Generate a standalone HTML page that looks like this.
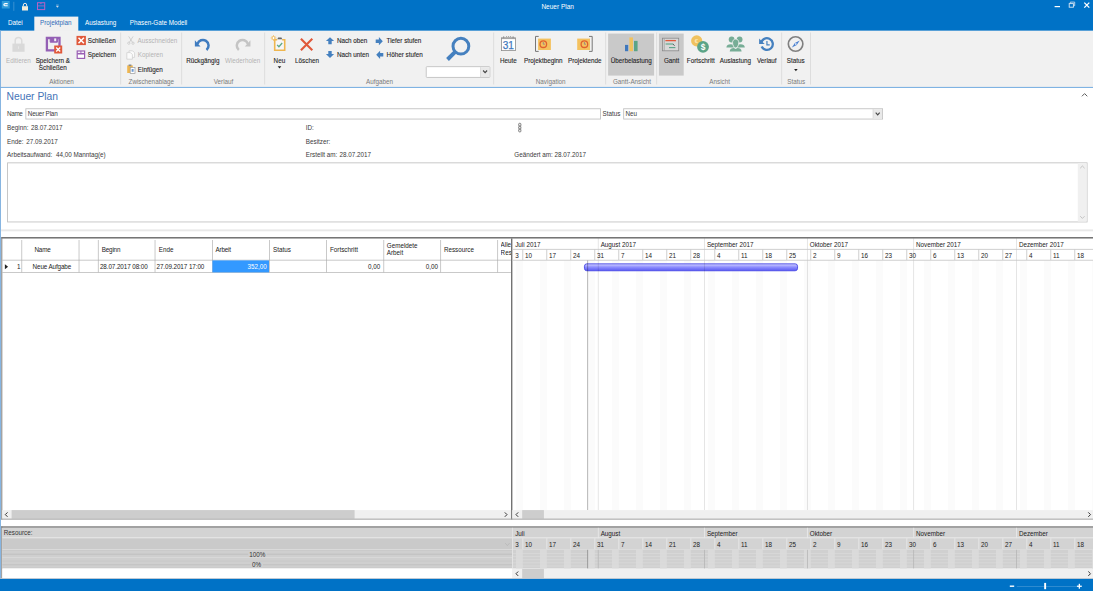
<!DOCTYPE html>
<html lang="de"><head><meta charset="utf-8"><title>Neuer Plan</title>
<style>
html,body{margin:0;padding:0;background:#fff;overflow:hidden}
body{width:1093px;height:591px;position:relative;font-family:"Liberation Sans",sans-serif;font-size:6.3px}
.r{position:absolute;display:block}
#g{position:absolute;left:0;top:0}
.t{position:absolute;display:block;white-space:nowrap;line-height:10px;height:10px}
.b{-webkit-text-stroke:.1px #262626}
</style></head><body>
<svg id="g" width="1093" height="591" viewBox="0 0 1093 591">
<rect x="0" y="0" width="1093" height="30.8" fill="#0072c6" />
<rect x="1.8" y="0.9" width="7.9" height="7.6" fill="#2f9bd9" />
<g transform="translate(1.8 0.9)"><path d="M5.9 2.7H3.3q-1.2 0-1.2 1.05T3.3 4.8H5.9" fill="none" stroke="#fff" stroke-width="1.1"/></g>
<rect x="13.3" y="1.8" width="1" height="9" fill="#fff" opacity=".22"/>
<g transform="translate(21 2)"><path d="M2.3 4.3V3a1.7 1.7 0 0 1 3.4 0v1.3" fill="none" stroke="#e8e8e8" stroke-width="1"/><rect x="1" y="4.2" width="6" height="4.3" fill="#f3ecd9"/></g>
<g transform="translate(37 2.2)"><rect x=".5" y=".5" width="7.2" height="6.9" fill="none" stroke="#b763c4" stroke-width="1"/><path d="M.5 3.7h7.2" stroke="#b763c4" stroke-width=".8"/><rect x="3.3" y=".9" width="1.2" height="1" fill="#b763c4"/></g>
<g transform="translate(55.5 4.5)"><path d="M.6 .6h2.6" stroke="#cfd8e6" stroke-width=".6"/><path d="M.5 1.6h2.8l-1.4 1.6z" fill="#cfd8e6"/></g>
<rect x="1054.6" y="6.0" width="5.4" height="1.2" fill="#fff" />
<g transform="translate(1068.5 1.3)"><path d="M1.8 2V.8h4.4v3.6H5" fill="none" stroke="#c5d9ee" stroke-width=".9"/><rect x=".7" y="2.3" width="4.2" height="3.6" fill="none" stroke="#dbe8f5" stroke-width=".9"/></g>
<g transform="translate(1083.5 2)"><path d="M.8 .6l5 5M5.8 .6l-5 5" stroke="#fff" stroke-width="1.3"/></g>
<rect x="34.3" y="16.6" width="44" height="14.5" fill="#f1f1f1" />
<rect x="0" y="30.8" width="1093" height="56.2" fill="#f1f1f1" />
<rect x="0" y="86.9" width="1093" height="1.1" fill="#7fb3e3" />
<rect x="0" y="30.5" width="0.9" height="548.5" fill="#7aadde" />
<rect x="120.3" y="32.5" width="0.8" height="52" fill="#d9d9d9" />
<rect x="181.3" y="32.5" width="0.8" height="52" fill="#d9d9d9" />
<rect x="264.3" y="32.5" width="0.8" height="52" fill="#d9d9d9" />
<rect x="493.3" y="32.5" width="0.8" height="52" fill="#d9d9d9" />
<rect x="605.3" y="32.5" width="0.8" height="52" fill="#d9d9d9" />
<rect x="656.3" y="32.5" width="0.8" height="52" fill="#d9d9d9" />
<rect x="781.3" y="32.5" width="0.8" height="52" fill="#d9d9d9" />
<rect x="810.2" y="32.5" width="0.8" height="52" fill="#d9d9d9" />
<g transform="translate(11 36)"><path d="M4.2 8V4.8a3.3 3.3 0 0 1 6.6 0V8" fill="none" stroke="#dbdbdb" stroke-width="1.5"/><rect x="1.4" y="7.6" width="12.2" height="8.2" fill="#d9d9d9"/><path d="M7.5 10.3v2.6" stroke="#e6e6e6" stroke-width="1"/></g>
<g transform="translate(45 36)"><path d="M1.9 2h12.6v12.4H1.9z" fill="none" stroke="#9460b5" stroke-width="2.3"/><path d="M5.2 1.6v4.6h7.2V1.6" fill="#9460b5" stroke="#9460b5" stroke-width="1"/><rect x="9.2" y="2.4" width="2" height="2.8" fill="#f1f1f1"/><rect x="9.2" y="9.5" width="8" height="8" fill="#e0583a"/><path d="M11.2 11.5l4 4M15.2 11.5l-4 4" stroke="#fff" stroke-width="1.3"/></g>
<g transform="translate(76.2 35.6)"><rect x=".3" y=".3" width="9.4" height="9.2" fill="#e0583a"/><path d="M2.3 2.2l5.4 5.4M7.7 2.2l-5.4 5.4" stroke="#fff" stroke-width="1.5"/></g>
<g transform="translate(76.5 50.3)"><rect x=".7" y=".7" width="7.4" height="7.4" fill="#fff" stroke="#9a5fb4" stroke-width="1.2"/><path d="M.7 3.4h7.4" stroke="#9a5fb4" stroke-width="1.6"/><path d="M4.4 .7v2.4" stroke="#9a5fb4" stroke-width=".9"/></g>
<g transform="translate(126.5 35.9)"><path d="M2.2 .5l3.8 6M6.6 .5l-3.8 6" stroke="#c6c6c6" stroke-width=".8" fill="none"/><circle cx="2.3" cy="7.3" r="1.15" fill="none" stroke="#c6c6c6" stroke-width=".7"/><circle cx="6.5" cy="7.3" r="1.15" fill="none" stroke="#c6c6c6" stroke-width=".7"/></g>
<g transform="translate(126 50)"><path d="M3 .8h3.6l2 2v4.6H3z" fill="#fbfbfb" stroke="#d0d0d0" stroke-width=".8"/><path d="M.8 2.6h3.6l2 2v4.6H.8z" fill="#fbfbfb" stroke="#d0d0d0" stroke-width=".8"/></g>
<g transform="translate(126.6 64)"><rect x=".6" y="1.4" width="5.6" height="7.6" fill="#efb64f"/><rect x="2" y=".5" width="2.8" height="1.6" fill="#8a8a8a"/><rect x="3.6" y="3.4" width="4.8" height="6" fill="#fff" stroke="#9a9a9a" stroke-width=".7"/><rect x="5" y="5" width="2" height="2.8" fill="#6d9ad3"/></g>
<g transform="translate(193 37)"><path d="M4.5 7A5.65 5.65 0 1 1 13.53 12.93" fill="none" stroke="#3f7cc0" stroke-width="2.5"/><path d="M1.9 3.2V9.4H7.5z" fill="#3f7cc0"/></g>
<g transform="translate(234.35 37)"><g transform="translate(18,0) scale(-1,1)"><path d="M4.5 7A5.65 5.65 0 1 1 13.53 12.93" fill="none" stroke="#c4c4c4" stroke-width="2.5"/><path d="M1.9 3.2V9.4H7.5z" fill="#c4c4c4"/></g></g>
<g transform="translate(270.8 35.3)"><path d="M6.4 4.4H3.9v10.6h10V4.4h-2.6" fill="#f6f6f8" stroke="#efb64f" stroke-width="1.6"/><path d="M6.6 3.9l.7-1.7h3.4l.7 1.7z" fill="#666"/><path d="M6.3 9.6l1.8 1.8 3.3-3.7" fill="none" stroke="#5fa886" stroke-width="1.3"/><circle cx="2.7" cy="2.7" r="1.5" fill="#fff" stroke="#efb64f" stroke-width=".9"/><path d="M2.7 -.2v1.1M2.7 4.5v1.1M-.2 2.7h1.1M4.5 2.7h1.1M.6 .6l.8.8M4.8 .6l-.8.8M.6 4.8l.8-.8M4.8 4.8l-.8-.8" stroke="#efb64f" stroke-width=".7"/></g>
<g transform="translate(277.7 66.1)"><path d="M0 .2h3.6l-1.8 2.2z" fill="#222"/></g>
<g transform="translate(299.9 37.8)"><path d="M1 1l11.4 11.4M12.4 1L1 12.4" stroke="#e0583a" stroke-width="2.1" stroke-linecap="butt"/></g>
<g transform="translate(326 37.2)"><path d="M4 0l4.1 3.9H5.7v3.2H2.3V3.9H-.1z" fill="#4580bf"/></g>
<g transform="translate(326 50.8)"><path d="M4 7.2l4.1-3.9H5.7V.1H2.3v3.2H-.1z" fill="#4580bf"/></g>
<g transform="translate(375.6 37.2)"><path d="M7.2 4L3.3-.1v2.4H.1v3.4h3.2v2.4z" fill="#4580bf"/></g>
<g transform="translate(376.2 50.8)"><path d="M0 4L3.9-.1v2.4h3.2v3.4H3.9v2.4z" fill="#4580bf"/></g>
<g transform="translate(445 36)"><circle cx="15.9" cy="10.2" r="7.9" fill="none" stroke="#4580bf" stroke-width="3"/><path d="M10.4 15.6L2.5 23.5" stroke="#4580bf" stroke-width="3.9"/></g>
<rect x="426.25" y="66.65" width="63.6" height="10.8" fill="#fff" stroke="#c2c2c2" stroke-width="0.9" rx="0.8" />
<rect x="480.6" y="67.1" width="8.8" height="9.9" fill="#e9e9e9" />
<rect x="480.3" y="67.1" width="0.6" height="9.9" fill="#cfcfcf" />
<g transform="translate(482.6 69.6)"><path d="M.5 .9l2 2.2 2-2.2" fill="none" stroke="#484848" stroke-width="1.15"/></g>
<g transform="translate(500.5 35.6)"><rect x=".9" y="2.2" width="14" height="12.8" fill="#fff" stroke="#8c8c8c" stroke-width=".8"/><path d="M.9 3h14" stroke="#8c8c8c" stroke-width=".8"/><path d="M3.2 .6v2M12.6 .6v2M5.6 1h1M7.6 1h1M9.6 1h1" stroke="#7a7a7a" stroke-width=".7"/><text x="7.8" y="13.3" font-family="Liberation Sans,sans-serif" font-size="10" fill="#3f78bd" stroke="#3f78bd" stroke-width=".25" text-anchor="middle">31</text></g>
<g transform="translate(534.5 35.6)"><path d="M4.2 .8H1v15h3.2" fill="none" stroke="#777" stroke-width="1"/><rect x="3.6" y="3" width="12.8" height="11.4" fill="#f4c15e"/><circle cx="8.8" cy="8.6" r="3.3" fill="none" stroke="#e0602f" stroke-width="1.3"/><path d="M8.8 6.4v2.2h1.6" fill="none" stroke="#8a7f8a" stroke-width=".8"/></g>
<g transform="translate(576 35.6)"><path d="M13 .8H16.2v15H13" fill="none" stroke="#777" stroke-width="1"/><rect x="1.2" y="3" width="12.8" height="11.4" fill="#f4c15e"/><circle cx="8.4" cy="8.6" r="3.3" fill="none" stroke="#e0602f" stroke-width="1.3"/><path d="M8.4 6.4v2.2h1.6" fill="none" stroke="#8a7f8a" stroke-width=".8"/></g>
<rect x="608.1" y="33.6" width="46" height="42" fill="#c9c9c9" />
<rect x="625" y="44.9" width="3.2" height="6.3" fill="#3f78bd" />
<rect x="629.4" y="37.4" width="3.6" height="13.8" fill="#f0c25f" />
<rect x="634" y="40.9" width="3.6" height="10.3" fill="#5ba488" />
<rect x="658.9" y="33.6" width="24.8" height="42" fill="#c9c9c9" />
<g transform="translate(662 37.6)"><rect x=".5" y=".6" width="16.2" height="12.6" fill="#d8d8d8" stroke="#8a8a8a" stroke-width=".8"/><path d="M2.2 1v12" stroke="#8a8a8a" stroke-width=".6"/><path d="M3.4 3h10" stroke="#e0583a" stroke-width="1.3"/><path d="M12.2 2.4h2l-1 1.6z" fill="#e0583a"/><path d="M3.6 6.4h7.6" stroke="#5ba488" stroke-width="1.1"/><path d="M11 6.4l1.6 1.8" stroke="#444" stroke-width=".8"/><path d="M7 10h6.4" stroke="#5ba488" stroke-width="1.1"/></g>
<g transform="translate(690.5 35)"><circle cx="6.2" cy="5.9" r="5.6" fill="#f0c25f"/><text x="6" y="8" font-family="Liberation Sans,sans-serif" font-size="6" font-weight="bold" fill="#fbe7b8" text-anchor="middle">€</text><circle cx="12.5" cy="11.8" r="5.9" fill="#5ba488"/><text x="12.5" y="14.8" font-family="Liberation Sans,sans-serif" font-size="8.4" font-weight="bold" fill="#fff" text-anchor="middle">$</text></g>
<g transform="translate(725.9 35.8)"><circle cx="5.72" cy="3.7" r="2.9" fill="#77ad96"/><circle cx="13.7" cy="3.7" r="2.9" fill="#77ad96"/><path d="M.5 11.8q.3-3.3 4.2-3.3 2.4 0 3.2 1.2v2.1z" fill="#77ad96"/><path d="M18.9 11.8q-.3-3.3-4.2-3.3-2.4 0-3.2 1.2v2.1z" fill="#77ad96"/><path d="M9.76 3.3c2.2 0 3.1 1.5 3.1 3.6 0 2.6-1.5 5.2-3.1 5.2s-3.1-2.6-3.1-5.2c0-2.1.9-3.6 3.1-3.6z" fill="#77ad96" stroke="#f1f1f1" stroke-width=".8"/><path d="M3.8 15.6q.4-3.3 4.2-3.3l1.76 1 1.76-1q3.8 0 4.2 3.3z" fill="#77ad96"/></g>
<g transform="translate(758.8 36.5)"><path d="M2.31 7.08A5.85 5.85 0 1 1 2.84 10.06" fill="none" stroke="#4580bf" stroke-width="2.3"/><path d="M.3 2.1V7.6H5.9z" fill="#4580bf"/><path d="M8.14 4.4v4h2.8" fill="none" stroke="#4580bf" stroke-width="1.2"/></g>
<g transform="translate(786.9 35.65)"><circle cx="8.69" cy="8.39" r="7.25" fill="none" stroke="#808080" stroke-width="1.65"/><path d="M12.81 4.85L9.83 9.39 4.99 11.85 7.97 7.31z" fill="#4a7fd0"/><circle cx="8.9" cy="8.35" r=".9" fill="#d5e2f5"/></g>
<g transform="translate(794.1 68.9)"><path d="M0 .2h3.6l-1.8 2.2z" fill="#222"/></g>
<g transform="translate(1081.2 92.4)"><path d="M.7 3.9l2.7-2.7 2.7 2.7" fill="none" stroke="#5e5e5e" stroke-width="1"/></g>
<rect x="25.85" y="108.75" width="574.7" height="10.3" fill="#fff" stroke="#c2c2c2" stroke-width="0.9" />
<rect x="623.65" y="108.75" width="258.9" height="10.3" fill="#fff" stroke="#c2c2c2" stroke-width="0.9" />
<rect x="873" y="109.1" width="9.1" height="9.4" fill="#e9e9e9" />
<rect x="872.7" y="109.1" width="0.6" height="9.4" fill="#cfcfcf" />
<g transform="translate(875.2 111.8)"><path d="M.5 .9l2 2.2 2-2.2" fill="none" stroke="#484848" stroke-width="1.15"/></g>
<g transform="translate(517.9 122.8)"><rect x=".8" y=".5" width="2.2" height="2.8" rx=".8" fill="none" stroke="#5a5a5a" stroke-width=".75"/><rect x=".8" y="3.4" width="2.2" height="2.8" rx=".8" fill="none" stroke="#5a5a5a" stroke-width=".75"/><rect x=".8" y="6.3" width="2.2" height="2.8" rx=".8" fill="none" stroke="#5a5a5a" stroke-width=".75"/></g>
<rect x="7.55" y="162.85" width="1079.5" height="59.1" fill="#fff" stroke="#c2c2c2" stroke-width="0.9" />
<rect x="1077.8" y="163.2" width="8.9" height="58.4" fill="#f0f0f0" />
<g transform="translate(1079.4 165.2)"><path d="M.8 3l2.2-2.2 2.2 2.2" fill="none" stroke="#b0b0b0" stroke-width=".7"/></g>
<g transform="translate(1079.4 215.2)"><path d="M.8 1l2.2 2.2 2.2-2.2" fill="none" stroke="#b0b0b0" stroke-width=".7"/></g>
<rect x="1.1" y="229.4" width="1092" height="1.9" fill="#e8e8e8" />
<rect x="1.3" y="237.1" width="1092" height="1.4" fill="#666" />
<rect x="1.3" y="237.1" width="1" height="282.6" fill="#7c7c7c" />
<rect x="21.5" y="240" width="0.65" height="32.4" fill="#acacac" />
<rect x="78.7" y="240" width="0.65" height="32.4" fill="#acacac" />
<rect x="97.9" y="240" width="0.65" height="32.4" fill="#acacac" />
<rect x="154.7" y="240" width="0.65" height="32.4" fill="#acacac" />
<rect x="212" y="240" width="0.65" height="32.4" fill="#acacac" />
<rect x="269" y="240" width="0.65" height="32.4" fill="#acacac" />
<rect x="326" y="240" width="0.65" height="32.4" fill="#acacac" />
<rect x="383.5" y="240" width="0.65" height="32.4" fill="#acacac" />
<rect x="440.4" y="240" width="0.65" height="32.4" fill="#acacac" />
<rect x="497.4" y="240" width="0.65" height="32.4" fill="#acacac" />
<rect x="2.3" y="259.8" width="508.6" height="0.65" fill="#acacac" />
<rect x="2.3" y="272.2" width="508.6" height="0.65" fill="#acacac" />
<g transform="translate(4.6 263.8)"><path d="M.3 .4v5l3.2-2.5z" fill="#222"/></g>
<rect x="212.4" y="260.4" width="56.6" height="12" fill="#3399ff" />
<rect x="511.0" y="238.4" width="1.4" height="281.2" fill="#727272" />
<rect x="515.94" y="260.5" width="6.86" height="249.5" fill="#fbfbfb" />
<rect x="539.94" y="260.5" width="6.86" height="249.5" fill="#fbfbfb" />
<rect x="563.94" y="260.5" width="6.86" height="249.5" fill="#fbfbfb" />
<rect x="587.94" y="260.5" width="6.86" height="249.5" fill="#fbfbfb" />
<rect x="611.94" y="260.5" width="6.86" height="249.5" fill="#fbfbfb" />
<rect x="635.94" y="260.5" width="6.86" height="249.5" fill="#fbfbfb" />
<rect x="659.94" y="260.5" width="6.86" height="249.5" fill="#fbfbfb" />
<rect x="683.94" y="260.5" width="6.86" height="249.5" fill="#fbfbfb" />
<rect x="707.94" y="260.5" width="6.86" height="249.5" fill="#fbfbfb" />
<rect x="731.94" y="260.5" width="6.86" height="249.5" fill="#fbfbfb" />
<rect x="755.94" y="260.5" width="6.86" height="249.5" fill="#fbfbfb" />
<rect x="779.94" y="260.5" width="6.86" height="249.5" fill="#fbfbfb" />
<rect x="803.94" y="260.5" width="6.86" height="249.5" fill="#fbfbfb" />
<rect x="827.94" y="260.5" width="6.86" height="249.5" fill="#fbfbfb" />
<rect x="851.94" y="260.5" width="6.86" height="249.5" fill="#fbfbfb" />
<rect x="875.94" y="260.5" width="6.86" height="249.5" fill="#fbfbfb" />
<rect x="899.94" y="260.5" width="6.86" height="249.5" fill="#fbfbfb" />
<rect x="923.94" y="260.5" width="6.86" height="249.5" fill="#fbfbfb" />
<rect x="947.94" y="260.5" width="6.86" height="249.5" fill="#fbfbfb" />
<rect x="971.94" y="260.5" width="6.86" height="249.5" fill="#fbfbfb" />
<rect x="995.94" y="260.5" width="6.86" height="249.5" fill="#fbfbfb" />
<rect x="1019.94" y="260.5" width="6.86" height="249.5" fill="#fbfbfb" />
<rect x="1043.94" y="260.5" width="6.86" height="249.5" fill="#fbfbfb" />
<rect x="1067.94" y="260.5" width="6.86" height="249.5" fill="#fbfbfb" />
<rect x="1091.94" y="260.5" width="6.86" height="249.5" fill="#fbfbfb" />
<defs><linearGradient id="bg1" x1="0" y1="0" x2="0" y2="1"><stop offset="0" stop-color="#d6d6ff"/><stop offset=".45" stop-color="#9090ff"/><stop offset="1" stop-color="#5c5cf2"/></linearGradient></defs>
<rect x="584.45" y="263.85" width="213.1" height="6.9" fill="url(#bg1)" stroke="#4646e6" stroke-width="0.9" rx="2.4" />
<rect x="597.83" y="238.4" width="0.8" height="271.6" fill="#000" opacity=".13"/>
<rect x="704.11" y="238.4" width="0.8" height="271.6" fill="#000" opacity=".13"/>
<rect x="806.97" y="238.4" width="0.8" height="271.6" fill="#000" opacity=".13"/>
<rect x="913.26" y="238.4" width="0.8" height="271.6" fill="#000" opacity=".13"/>
<rect x="1016.11" y="238.4" width="0.8" height="271.6" fill="#000" opacity=".13"/>
<rect x="512.5" y="248.9" width="581" height="0.8" fill="#c4c4c4" />
<rect x="512.5" y="259.8" width="581" height="0.8" fill="#c4c4c4" />
<rect x="522.4" y="249.5" width="0.8" height="10.5" fill="#c4c4c4" />
<rect x="546.4" y="249.5" width="0.8" height="10.5" fill="#c4c4c4" />
<rect x="570.4" y="249.5" width="0.8" height="10.5" fill="#c4c4c4" />
<rect x="594.4" y="249.5" width="0.8" height="10.5" fill="#c4c4c4" />
<rect x="618.4" y="249.5" width="0.8" height="10.5" fill="#c4c4c4" />
<rect x="642.4" y="249.5" width="0.8" height="10.5" fill="#c4c4c4" />
<rect x="666.4" y="249.5" width="0.8" height="10.5" fill="#c4c4c4" />
<rect x="690.4" y="249.5" width="0.8" height="10.5" fill="#c4c4c4" />
<rect x="714.4" y="249.5" width="0.8" height="10.5" fill="#c4c4c4" />
<rect x="738.4" y="249.5" width="0.8" height="10.5" fill="#c4c4c4" />
<rect x="762.4" y="249.5" width="0.8" height="10.5" fill="#c4c4c4" />
<rect x="786.4" y="249.5" width="0.8" height="10.5" fill="#c4c4c4" />
<rect x="810.4" y="249.5" width="0.8" height="10.5" fill="#c4c4c4" />
<rect x="834.4" y="249.5" width="0.8" height="10.5" fill="#c4c4c4" />
<rect x="858.4" y="249.5" width="0.8" height="10.5" fill="#c4c4c4" />
<rect x="882.4" y="249.5" width="0.8" height="10.5" fill="#c4c4c4" />
<rect x="906.4" y="249.5" width="0.8" height="10.5" fill="#c4c4c4" />
<rect x="930.4" y="249.5" width="0.8" height="10.5" fill="#c4c4c4" />
<rect x="954.4" y="249.5" width="0.8" height="10.5" fill="#c4c4c4" />
<rect x="978.4" y="249.5" width="0.8" height="10.5" fill="#c4c4c4" />
<rect x="1002.4" y="249.5" width="0.8" height="10.5" fill="#c4c4c4" />
<rect x="1026.4" y="249.5" width="0.8" height="10.5" fill="#c4c4c4" />
<rect x="1050.4" y="249.5" width="0.8" height="10.5" fill="#c4c4c4" />
<rect x="1074.4" y="249.5" width="0.8" height="10.5" fill="#c4c4c4" />
<rect x="587.3" y="260.5" width="0.8" height="249.5" fill="#000" opacity=".36"/>
<rect x="2.3" y="510.1" width="508.8" height="8.6" fill="#f0f0f0" />
<rect x="11.6" y="510.1" width="343" height="8.6" fill="#cdcdcd" />
<g transform="translate(4.5 511.9)"><path d="M3 .5L.8 2.7 3 4.9" fill="none" stroke="#333" stroke-width="1"/></g>
<g transform="translate(503.8 511.9)"><path d="M1 .5l2.2 2.2L1 4.9" fill="none" stroke="#333" stroke-width="1"/></g>
<rect x="512.3" y="510.1" width="580.7" height="8.6" fill="#f0f0f0" />
<rect x="522.2" y="510.1" width="21.7" height="8.6" fill="#cdcdcd" />
<g transform="translate(515.2 511.9)"><path d="M3 .5L.8 2.7 3 4.9" fill="none" stroke="#333" stroke-width="1"/></g>
<g transform="translate(1087.3 511.9)"><path d="M1 .5l2.2 2.2L1 4.9" fill="none" stroke="#333" stroke-width="1"/></g>
<rect x="1.3" y="518.6" width="1092" height="1.1" fill="#a9a9a9" />
<rect x="1.3" y="526.2" width="1092" height="1.7" fill="#8c8c8c" />
<rect x="1.3" y="526.2" width="1" height="52.3" fill="#7c7c7c" />
<rect x="2.3" y="527.8" width="1090.7" height="9.3" fill="#d3d3d3" />
<rect x="2.3" y="537.1" width="1090.7" height="1.1" fill="#e0e0e0" />
<rect x="2.3" y="538.2" width="509.8" height="11.1" fill="#cacaca" />
<rect x="512.1" y="538.2" width="581" height="11.1" fill="#d3d3d3" />
<rect x="2.3" y="549.3" width="509.8" height="19.2" fill="#cfcfcf" />
<rect x="512.1" y="549.3" width="581" height="19.2" fill="#d0d0d0" />
<rect x="2.3" y="549.1" width="1090.7" height="0.7" fill="#dcdcdc" />
<g transform="translate(504.6 542.4)"><path d="M.6 .7l2.2 2.5 2.2-2.5" fill="none" stroke="#b4b4b4" stroke-width=".7"/></g>
<rect x="2.3" y="550.0" width="509.8" height="0.7" fill="#c8c8c8" />
<rect x="2.3" y="553.8" width="509.8" height="0.7" fill="#b9b9b9" />
<rect x="2.3" y="557.2" width="509.8" height="0.7" fill="#dcdcdc" />
<rect x="2.3" y="560.7" width="509.8" height="0.7" fill="#c6c6c6" />
<rect x="2.3" y="564.5" width="509.8" height="0.7" fill="#bcbcbc" />
<rect x="2.3" y="567.5" width="509.8" height="0.7" fill="#c8c8c8" />
<rect x="248.2" y="551" width="18.4" height="6" fill="#cfcfcf" />
<rect x="250.6" y="562" width="12.4" height="5.6" fill="#cfcfcf" />
<rect x="515.94" y="549.8" width="6.86" height="18.7" fill="#dadada" />
<rect x="539.94" y="549.8" width="6.86" height="18.7" fill="#dadada" />
<rect x="563.94" y="549.8" width="6.86" height="18.7" fill="#dadada" />
<rect x="587.94" y="549.8" width="6.86" height="18.7" fill="#dadada" />
<rect x="611.94" y="549.8" width="6.86" height="18.7" fill="#dadada" />
<rect x="635.94" y="549.8" width="6.86" height="18.7" fill="#dadada" />
<rect x="659.94" y="549.8" width="6.86" height="18.7" fill="#dadada" />
<rect x="683.94" y="549.8" width="6.86" height="18.7" fill="#dadada" />
<rect x="707.94" y="549.8" width="6.86" height="18.7" fill="#dadada" />
<rect x="731.94" y="549.8" width="6.86" height="18.7" fill="#dadada" />
<rect x="755.94" y="549.8" width="6.86" height="18.7" fill="#dadada" />
<rect x="779.94" y="549.8" width="6.86" height="18.7" fill="#dadada" />
<rect x="803.94" y="549.8" width="6.86" height="18.7" fill="#dadada" />
<rect x="827.94" y="549.8" width="6.86" height="18.7" fill="#dadada" />
<rect x="851.94" y="549.8" width="6.86" height="18.7" fill="#dadada" />
<rect x="875.94" y="549.8" width="6.86" height="18.7" fill="#dadada" />
<rect x="899.94" y="549.8" width="6.86" height="18.7" fill="#dadada" />
<rect x="923.94" y="549.8" width="6.86" height="18.7" fill="#dadada" />
<rect x="947.94" y="549.8" width="6.86" height="18.7" fill="#dadada" />
<rect x="971.94" y="549.8" width="6.86" height="18.7" fill="#dadada" />
<rect x="995.94" y="549.8" width="6.86" height="18.7" fill="#dadada" />
<rect x="1019.94" y="549.8" width="6.86" height="18.7" fill="#dadada" />
<rect x="1043.94" y="549.8" width="6.86" height="18.7" fill="#dadada" />
<rect x="1067.94" y="549.8" width="6.86" height="18.7" fill="#dadada" />
<rect x="1091.94" y="549.8" width="6.86" height="18.7" fill="#dadada" />
<rect x="512.8" y="553.3" width="580.2" height="0.6" fill="#dcdcdc" />
<rect x="512.8" y="556.4" width="580.2" height="0.6" fill="#dcdcdc" />
<rect x="512.8" y="559.5" width="580.2" height="0.6" fill="#dcdcdc" />
<rect x="512.8" y="562.6" width="580.2" height="0.6" fill="#dcdcdc" />
<rect x="512.8" y="565.7" width="580.2" height="0.6" fill="#dcdcdc" />
<rect x="512.2" y="527.8" width="0.8" height="40.7" fill="#e6e6e6" />
<rect x="597.83" y="527.8" width="0.9" height="10.4" fill="#e8e8e8" />
<rect x="597.83" y="549.8" width="0.8" height="18.7" fill="#b6b6b6" />
<rect x="704.11" y="527.8" width="0.9" height="10.4" fill="#e8e8e8" />
<rect x="704.11" y="549.8" width="0.8" height="18.7" fill="#b6b6b6" />
<rect x="806.97" y="527.8" width="0.9" height="10.4" fill="#e8e8e8" />
<rect x="806.97" y="549.8" width="0.8" height="18.7" fill="#b6b6b6" />
<rect x="913.26" y="527.8" width="0.9" height="10.4" fill="#e8e8e8" />
<rect x="913.26" y="549.8" width="0.8" height="18.7" fill="#b6b6b6" />
<rect x="1016.11" y="527.8" width="0.9" height="10.4" fill="#e8e8e8" />
<rect x="1016.11" y="549.8" width="0.8" height="18.7" fill="#b6b6b6" />
<rect x="522.4" y="538.2" width="0.9" height="11.1" fill="#e8e8e8" />
<rect x="546.4" y="538.2" width="0.9" height="11.1" fill="#e8e8e8" />
<rect x="570.4" y="538.2" width="0.9" height="11.1" fill="#e8e8e8" />
<rect x="594.4" y="538.2" width="0.9" height="11.1" fill="#e8e8e8" />
<rect x="618.4" y="538.2" width="0.9" height="11.1" fill="#e8e8e8" />
<rect x="642.4" y="538.2" width="0.9" height="11.1" fill="#e8e8e8" />
<rect x="666.4" y="538.2" width="0.9" height="11.1" fill="#e8e8e8" />
<rect x="690.4" y="538.2" width="0.9" height="11.1" fill="#e8e8e8" />
<rect x="714.4" y="538.2" width="0.9" height="11.1" fill="#e8e8e8" />
<rect x="738.4" y="538.2" width="0.9" height="11.1" fill="#e8e8e8" />
<rect x="762.4" y="538.2" width="0.9" height="11.1" fill="#e8e8e8" />
<rect x="786.4" y="538.2" width="0.9" height="11.1" fill="#e8e8e8" />
<rect x="810.4" y="538.2" width="0.9" height="11.1" fill="#e8e8e8" />
<rect x="834.4" y="538.2" width="0.9" height="11.1" fill="#e8e8e8" />
<rect x="858.4" y="538.2" width="0.9" height="11.1" fill="#e8e8e8" />
<rect x="882.4" y="538.2" width="0.9" height="11.1" fill="#e8e8e8" />
<rect x="906.4" y="538.2" width="0.9" height="11.1" fill="#e8e8e8" />
<rect x="930.4" y="538.2" width="0.9" height="11.1" fill="#e8e8e8" />
<rect x="954.4" y="538.2" width="0.9" height="11.1" fill="#e8e8e8" />
<rect x="978.4" y="538.2" width="0.9" height="11.1" fill="#e8e8e8" />
<rect x="1002.4" y="538.2" width="0.9" height="11.1" fill="#e8e8e8" />
<rect x="1026.4" y="538.2" width="0.9" height="11.1" fill="#e8e8e8" />
<rect x="1050.4" y="538.2" width="0.9" height="11.1" fill="#e8e8e8" />
<rect x="1074.4" y="538.2" width="0.9" height="11.1" fill="#e8e8e8" />
<rect x="587.3" y="549.8" width="0.8" height="18.7" fill="#8e8e8e" />
<rect x="2.3" y="568.5" width="509.8" height="10" fill="#fff" />
<rect x="512.1" y="568.8" width="581" height="9.7" fill="#f0f0f0" />
<rect x="522.2" y="568.8" width="21.7" height="9.7" fill="#cdcdcd" />
<g transform="translate(515.2 571.0)"><path d="M3 .5L.8 2.7 3 4.9" fill="none" stroke="#333" stroke-width="1"/></g>
<g transform="translate(1087.3 571.0)"><path d="M1 .5l2.2 2.2L1 4.9" fill="none" stroke="#333" stroke-width="1"/></g>
<rect x="0" y="578.9" width="1093" height="12.1" fill="#0072c6" />
<rect x="0" y="578.2" width="1093" height="0.8" fill="#b4c0cc" />
<rect x="1009.8" y="585.5" width="4.4" height="1.4" fill="#fff" />
<rect x="1016.8" y="586.0" width="60" height="0.6" fill="#fff" opacity=".3"/>
<rect x="1044.2" y="582.9" width="1.9" height="6.3" fill="#fff" />
<rect x="1076.9" y="585.6" width="4.9" height="1.3" fill="#fff" />
<rect x="1078.7" y="583.8" width="1.3" height="4.9" fill="#fff" />
</svg>
<span class="t" style="left:457.7px;width:200px;text-align:center;top:2px;font-size:6.5px;color:#fff;">Neuer Plan</span>
<span class="t" style="left:8px;top:18px;color:#fff;">Datei</span>
<span class="t" style="left:40px;top:18px;color:#2e6cb8;">Projektplan</span>
<span class="t" style="left:85px;top:18px;color:#fff;">Auslastung</span>
<span class="t" style="left:129.8px;top:18px;color:#fff;">Phasen-Gate Modell</span>
<span class="t" style="left:-38.5px;width:200px;text-align:center;top:77px;color:#7a7a7a;">Aktionen</span>
<span class="t" style="left:51.3px;width:200px;text-align:center;top:77px;color:#7a7a7a;">Zwischenablage</span>
<span class="t" style="left:123.5px;width:200px;text-align:center;top:77px;color:#7a7a7a;">Verlauf</span>
<span class="t" style="left:279.5px;width:200px;text-align:center;top:77px;color:#7a7a7a;">Aufgaben</span>
<span class="t" style="left:450.7px;width:200px;text-align:center;top:77px;color:#7a7a7a;">Navigation</span>
<span class="t" style="left:532px;width:200px;text-align:center;top:77px;color:#7a7a7a;">Gantt-Ansicht</span>
<span class="t" style="left:619.7px;width:200px;text-align:center;top:77px;color:#7a7a7a;">Ansicht</span>
<span class="t" style="left:696.3px;width:200px;text-align:center;top:77px;color:#7a7a7a;">Status</span>
<span class="t" style="left:-81.6px;width:200px;text-align:center;top:56px;color:#b4b4b4;">Editieren</span>
<span class="t b" style="left:-47.2px;width:200px;text-align:center;top:56px;color:#262626;">Speichern &amp;</span>
<span class="t b" style="left:-47.2px;width:200px;text-align:center;top:63px;color:#262626;">Schließen</span>
<span class="t b" style="left:87.7px;top:36px;color:#262626;">Schließen</span>
<span class="t b" style="left:87.7px;top:50px;color:#262626;">Speichern</span>
<span class="t" style="left:137.6px;top:36px;color:#b4b4b4;">Ausschneiden</span>
<span class="t" style="left:137.8px;top:50px;color:#b4b4b4;">Kopieren</span>
<span class="t b" style="left:137.8px;top:65px;color:#262626;">Einfügen</span>
<span class="t b" style="left:102.8px;width:200px;text-align:center;top:56px;color:#262626;">Rückgängig</span>
<span class="t" style="left:142.7px;width:200px;text-align:center;top:56px;color:#b4b4b4;">Wiederholen</span>
<span class="t b" style="left:179.4px;width:200px;text-align:center;top:56px;color:#262626;">Neu</span>
<span class="t b" style="left:207px;width:200px;text-align:center;top:56px;color:#262626;">Löschen</span>
<span class="t b" style="left:336.9px;top:36px;color:#262626;">Nach oben</span>
<span class="t b" style="left:336.9px;top:50px;color:#262626;">Nach unten</span>
<span class="t b" style="left:386.6px;top:36px;color:#262626;">Tiefer stufen</span>
<span class="t b" style="left:386.6px;top:50px;color:#262626;">Höher stufen</span>
<span class="t b" style="left:408.3px;width:200px;text-align:center;top:56px;color:#262626;">Heute</span>
<span class="t b" style="left:443.3px;width:200px;text-align:center;top:56px;color:#262626;">Projektbeginn</span>
<span class="t b" style="left:484.8px;width:200px;text-align:center;top:56px;color:#262626;">Projektende</span>
<span class="t b" style="left:531.3px;width:200px;text-align:center;top:56px;color:#262626;">Überbelastung</span>
<span class="t b" style="left:571.6px;width:200px;text-align:center;top:56px;color:#262626;">Gantt</span>
<span class="t b" style="left:600.8px;width:200px;text-align:center;top:56px;color:#262626;">Fortschritt</span>
<span class="t b" style="left:635.4px;width:200px;text-align:center;top:56px;color:#262626;">Auslastung</span>
<span class="t b" style="left:666.8px;width:200px;text-align:center;top:56px;color:#262626;">Verlauf</span>
<span class="t b" style="left:695.8px;width:200px;text-align:center;top:56px;color:#262626;">Status</span>
<span class="t" style="left:6.5px;top:92px;font-size:10.3px;color:#4474b8;">Neuer Plan</span>
<span class="t" style="left:7.1px;top:109px;color:#3a3a3a;letter-spacing:-.35px">Name</span>
<span class="t" style="left:27.8px;top:109px;color:#3a3a3a;letter-spacing:-.18px">Neuer Plan</span>
<span class="t" style="left:602.5px;top:109px;color:#3a3a3a;">Status</span>
<span class="t" style="left:625.4px;top:109px;color:#3a3a3a;">Neu</span>
<span class="t" style="left:7.1px;top:123px;color:#3a3a3a;">Beginn:</span>
<span class="t" style="left:31px;top:123px;color:#3a3a3a;">28.07.2017</span>
<span class="t" style="left:7.1px;top:137px;color:#3a3a3a;">Ende:</span>
<span class="t" style="left:26.3px;top:137px;color:#3a3a3a;">27.09.2017</span>
<span class="t" style="left:7.1px;top:150px;color:#3a3a3a;">Arbeitsaufwand:</span>
<span class="t" style="left:56px;top:150px;color:#3a3a3a;">44,00 Manntag(e)</span>
<span class="t" style="left:305.8px;top:123px;color:#3a3a3a;">ID:</span>
<span class="t" style="left:305.8px;top:137px;color:#3a3a3a;">Besitzer:</span>
<span class="t" style="left:305.8px;top:150px;color:#3a3a3a;">Erstellt am:</span>
<span class="t" style="left:339.6px;top:150px;color:#3a3a3a;">28.07.2017</span>
<span class="t" style="left:514.3px;top:150px;color:#3a3a3a;">Geändert am:</span>
<span class="t" style="left:554.5px;top:150px;color:#3a3a3a;">28.07.2017</span>
<span class="t" style="left:34.5px;top:245px;color:#222;letter-spacing:-.2px">Name</span>
<span class="t" style="left:101.8px;top:245px;color:#222;letter-spacing:-.2px">Beginn</span>
<span class="t" style="left:158.7px;top:245px;color:#222;">Ende</span>
<span class="t" style="left:215.4px;top:245px;color:#222;letter-spacing:-.15px">Arbeit</span>
<span class="t" style="left:273px;top:245px;color:#222;">Status</span>
<span class="t" style="left:330px;top:245px;color:#222;">Fortschritt</span>
<span class="t" style="left:386.8px;top:241px;color:#222;">Gemeldete</span>
<span class="t" style="left:386.8px;top:248px;color:#222;">Arbeit</span>
<span class="t" style="left:443.9px;top:245px;color:#222;">Ressource</span>
<div class="r" style="left:500.6px;top:241px;width:10.4px;height:18px;overflow:hidden"><span class="t" style="left:0;top:-1px;color:#222">Alle</span><span class="t" style="left:0;top:7px;color:#222">Res</span></div>
<span class="t" style="left:17px;top:262px;color:#222;">1</span>
<span class="t" style="left:32.6px;top:262px;color:#222;letter-spacing:-.12px">Neue Aufgabe</span>
<span class="t" style="left:99.9px;top:262px;color:#222;letter-spacing:-.08px">28.07.2017 08:00</span>
<span class="t" style="left:156.5px;top:262px;color:#222;letter-spacing:-.08px">27.09.2017 17:00</span>
<span class="t" style="right:826.2px;top:262px;color:#fff;">352,00</span>
<span class="t" style="right:712.8px;top:262px;color:#222;">0,00</span>
<span class="t" style="right:655.1px;top:262px;color:#222;">0,00</span>
<span class="t" style="left:515.2px;top:240px;color:#222;">Juli 2017</span>
<span class="t" style="left:600.63px;top:240px;color:#222;">August 2017</span>
<span class="t" style="left:706.91px;top:240px;color:#222;">September 2017</span>
<span class="t" style="left:809.77px;top:240px;color:#222;">Oktober 2017</span>
<span class="t" style="left:916.06px;top:240px;color:#222;">November 2017</span>
<span class="t" style="left:1018.91px;top:240px;color:#222;">Dezember 2017</span>
<span class="t" style="left:515.2px;top:251px;color:#222;">3</span>
<span class="t" style="left:525.0px;top:251px;color:#222;">10</span>
<span class="t" style="left:549.0px;top:251px;color:#222;">17</span>
<span class="t" style="left:573.0px;top:251px;color:#222;">24</span>
<span class="t" style="left:597.0px;top:251px;color:#222;">31</span>
<span class="t" style="left:621.0px;top:251px;color:#222;">7</span>
<span class="t" style="left:645.0px;top:251px;color:#222;">14</span>
<span class="t" style="left:669.0px;top:251px;color:#222;">21</span>
<span class="t" style="left:693.0px;top:251px;color:#222;">28</span>
<span class="t" style="left:717.0px;top:251px;color:#222;">4</span>
<span class="t" style="left:741.0px;top:251px;color:#222;">11</span>
<span class="t" style="left:765.0px;top:251px;color:#222;">18</span>
<span class="t" style="left:789.0px;top:251px;color:#222;">25</span>
<span class="t" style="left:813.0px;top:251px;color:#222;">2</span>
<span class="t" style="left:837.0px;top:251px;color:#222;">9</span>
<span class="t" style="left:861.0px;top:251px;color:#222;">16</span>
<span class="t" style="left:885.0px;top:251px;color:#222;">23</span>
<span class="t" style="left:909.0px;top:251px;color:#222;">30</span>
<span class="t" style="left:933.0px;top:251px;color:#222;">6</span>
<span class="t" style="left:957.0px;top:251px;color:#222;">13</span>
<span class="t" style="left:981.0px;top:251px;color:#222;">20</span>
<span class="t" style="left:1005.0px;top:251px;color:#222;">27</span>
<span class="t" style="left:1029.0px;top:251px;color:#222;">4</span>
<span class="t" style="left:1053.0px;top:251px;color:#222;">11</span>
<span class="t" style="left:1077.0px;top:251px;color:#222;">18</span>
<span class="t" style="left:3.8px;top:528px;color:#333;">Resource:</span>
<span class="t" style="left:157.4px;width:200px;text-align:center;top:550px;color:#333;">100%</span>
<span class="t" style="left:156.6px;width:200px;text-align:center;top:560px;color:#333;">0%</span>
<span class="t" style="left:600.63px;top:529px;color:#222;">August</span>
<span class="t" style="left:706.91px;top:529px;color:#222;">September</span>
<span class="t" style="left:809.77px;top:529px;color:#222;">Oktober</span>
<span class="t" style="left:916.06px;top:529px;color:#222;">November</span>
<span class="t" style="left:1018.91px;top:529px;color:#222;">Dezember</span>
<span class="t" style="left:515.2px;top:529px;color:#222;">Juli</span>
<span class="t" style="left:515.2px;top:540px;color:#222;">3</span>
<span class="t" style="left:525.0px;top:540px;color:#222;">10</span>
<span class="t" style="left:549.0px;top:540px;color:#222;">17</span>
<span class="t" style="left:573.0px;top:540px;color:#222;">24</span>
<span class="t" style="left:597.0px;top:540px;color:#222;">31</span>
<span class="t" style="left:621.0px;top:540px;color:#222;">7</span>
<span class="t" style="left:645.0px;top:540px;color:#222;">14</span>
<span class="t" style="left:669.0px;top:540px;color:#222;">21</span>
<span class="t" style="left:693.0px;top:540px;color:#222;">28</span>
<span class="t" style="left:717.0px;top:540px;color:#222;">4</span>
<span class="t" style="left:741.0px;top:540px;color:#222;">11</span>
<span class="t" style="left:765.0px;top:540px;color:#222;">18</span>
<span class="t" style="left:789.0px;top:540px;color:#222;">25</span>
<span class="t" style="left:813.0px;top:540px;color:#222;">2</span>
<span class="t" style="left:837.0px;top:540px;color:#222;">9</span>
<span class="t" style="left:861.0px;top:540px;color:#222;">16</span>
<span class="t" style="left:885.0px;top:540px;color:#222;">23</span>
<span class="t" style="left:909.0px;top:540px;color:#222;">30</span>
<span class="t" style="left:933.0px;top:540px;color:#222;">6</span>
<span class="t" style="left:957.0px;top:540px;color:#222;">13</span>
<span class="t" style="left:981.0px;top:540px;color:#222;">20</span>
<span class="t" style="left:1005.0px;top:540px;color:#222;">27</span>
<span class="t" style="left:1029.0px;top:540px;color:#222;">4</span>
<span class="t" style="left:1053.0px;top:540px;color:#222;">11</span>
<span class="t" style="left:1077.0px;top:540px;color:#222;">18</span>
</body></html>
